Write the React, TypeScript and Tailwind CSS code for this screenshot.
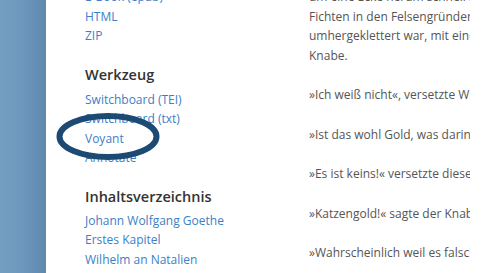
const links1 = ["E-Book (epub)", "HTML", "ZIP"];
const tools = ["Switchboard (TEI)", "Switchboard (txt)", "Voyant", "Annotate"];
const toc = ["Johann Wolfgang Goethe", "Erstes Kapitel", "Wilhelm an Natalien"];

const paragraphs = [
  [
    "um eine Ecke herum schnell auf ihn zukam,",
    "Fichten in den Felsengründen",
    "umhergeklettert war, mit einem",
    "Knabe.",
  ],
  ["»Ich weiß nicht«, versetzte Wilhelm"],
  ["»Ist das wohl Gold, was darin ist?«"],
  ["»Es ist keins!« versetzte dieser"],
  ["»Katzengold!« sagte der Knabe"],
  ["»Wahrscheinlich weil es falsch ist«"],
];

function LinkList({ items }: { items: string[] }) {
  return (
    <ul className="text-[12px] leading-[19.5px]">
      {items.map((t) => (
        <li key={t}>
          <a className="text-[#3b80c6]">{t}</a>
        </li>
      ))}
    </ul>
  );
}

export default function App() {
  return (
    <div
      className="flex h-[273px] w-[484px] overflow-hidden bg-white"
      style={{ fontFamily: '"Open Sans", "Liberation Sans", sans-serif' }}
    >
      <div className="w-[46px] shrink-0 bg-gradient-to-r from-[#749dc1] via-[#6d98bd] to-[#5e88ad]" />

      <aside className="relative mt-[-13px] w-[224px] shrink-0 pl-[39px]">
        <LinkList items={links1} />

        <h3 className="mt-[18px] text-[14.5px] font-semibold leading-[22px] text-[#333]">Werkzeug</h3>
        <div className="mt-[4px]">
          <LinkList items={tools} />
        </div>

        <h3 className="mt-[18px] text-[14.5px] font-semibold leading-[22px] text-[#333]">Inhaltsverzeichnis</h3>
        <div className="mt-[3px]">
          <LinkList items={toc} />
        </div>

        {/* hand-drawn highlight around Voyant */}
        <svg
          className="pointer-events-none absolute left-[10px] top-[125px]"
          width="106"
          height="50"
          viewBox="0 0 106 50"
        >
          <ellipse cx="52" cy="24.5" rx="48.5" ry="20.5" fill="none" stroke="#1d4a72" strokeWidth="6" />
        </svg>
      </aside>

      <main className="mt-[-13px] w-[200px] shrink-0 pl-[39px]">
        <div className="w-[161px] overflow-hidden whitespace-nowrap text-[12px] leading-[19.5px] text-[#555]">
          {paragraphs.map((p, i) => (
            <p key={i} className="mb-[20px]">
              {p.map((line) => (
                <span key={line} className="block">
                  {line}
                </span>
              ))}
            </p>
          ))}
        </div>
      </main>
    </div>
  );
}
